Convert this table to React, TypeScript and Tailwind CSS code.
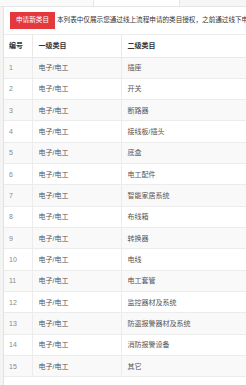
import React from "react";

const rows = [
  "插座",
  "开关",
  "断路器",
  "接线板/插头",
  "底盒",
  "电工配件",
  "智能家居系统",
  "布线箱",
  "转换器",
  "电线",
  "电工套管",
  "监控器材及系统",
  "防盗报警器材及系统",
  "消防报警设备",
  "其它",
];

const App = () => {
  return (
    <div
      className="w-[246px] h-[385px] overflow-hidden bg-[#f4f4f4] text-[7px] leading-none"
      style={{ fontFamily: '"Liberation Sans", "Noto Sans CJK SC", sans-serif' }}
    >
      {/* tabs */}
      <div className="flex h-[7px] border-b border-[#e6e6e6]">
        <div className="w-[93px] bg-[#fafafa]" />
        <div className="w-[87px] bg-white border-x border-[#e6e6e6]" />
        <div className="flex-1 bg-[#f6f6f6]" />
      </div>

      <div className="ml-[3px] h-full bg-white border-l border-[#e2e2e2]">
        {/* toolbar */}
        <div className="flex items-center h-[28px] pl-[6px] gap-[2px] border-b border-[#ebebeb] overflow-hidden">
          <button className="shrink-0 w-[45px] h-[17px] bg-[#e4393c] text-white text-[6.6px] flex items-center justify-center">
            申请新类目
          </button>
          <span className="whitespace-nowrap text-[#333] text-[6.6px]">
            本列表中仅展示您通过线上流程申请的类目授权，之前通过线下申请的类目授权请联系客服查看
          </span>
        </div>

        {/* table */}
        <table className="w-full border-collapse table-fixed">
          <colgroup>
            <col className="w-[28px]" />
            <col className="w-[89px]" />
            <col />
          </colgroup>
          <thead>
            <tr className="h-[22px] text-[#333]">
              <th className="text-left font-semibold pl-[5px] border-b border-r border-[#e8e8e8]">编号</th>
              <th className="text-left font-semibold pl-[6px] border-b border-r border-[#e8e8e8]">一级类目</th>
              <th className="text-left font-semibold pl-[6px] border-b border-[#e8e8e8]">二级类目</th>
            </tr>
          </thead>
          <tbody>
            {rows.map((name, i) => (
              <tr key={name} className={`h-[21.33px] ${i % 2 === 0 ? "bg-[#f9f9f9]" : "bg-white"}`}>
                <td className="pl-[5px] text-[#888] border-b border-r border-[#ececec]">{i + 1}</td>
                <td className="pl-[6px] text-[#555] border-b border-r border-[#ececec]">电子/电工</td>
                <td className="pl-[6px] text-[#555] border-b border-[#ececec]">{name}</td>
              </tr>
            ))}
          </tbody>
        </table>
      </div>
    </div>
  );
};

export default App;
